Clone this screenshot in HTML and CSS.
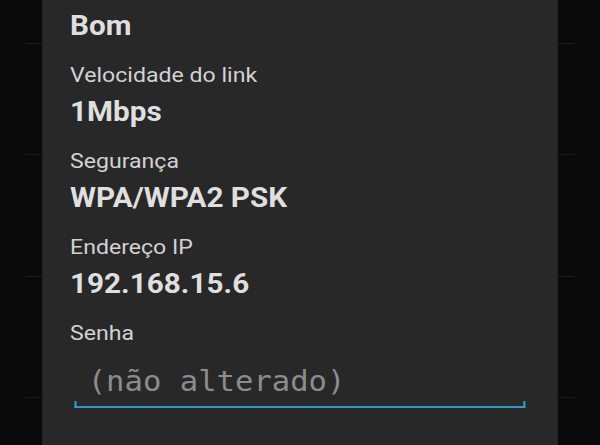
FILE: index.html
```html
<!DOCTYPE html>
<html lang="pt">
<head>
<meta charset="utf-8">
<link rel="stylesheet" href="styles.css">
</head>
<body>
<div class="screen">
  <div class="side side-left">
    <div class="rule r1"></div>
    <div class="rule r2"></div>
    <div class="rule r3"></div>
    <div class="rule r4"></div>
  </div>
  <div class="dialog">
    <div class="details">
      <div class="item">
        <div class="label">Intensidade do sinal</div>
        <div class="value">Bom</div>
      </div>
      <div class="item">
        <div class="label">Velocidade do link</div>
        <div class="value">1Mbps</div>
      </div>
      <div class="item">
        <div class="label">Segurança</div>
        <div class="value">WPA/WPA2 PSK</div>
      </div>
      <div class="item">
        <div class="label">Endereço IP</div>
        <div class="value">192.168.15.6</div>
      </div>
      <div class="item">
        <div class="label">Senha</div>
        <div class="field">
          <div class="field-text">(não alterado)</div>
          <div class="field-line"></div>
        </div>
      </div>
    </div>
  </div>
  <div class="side side-right">
    <div class="rule r1"></div>
    <div class="rule r2"></div>
    <div class="rule r3"></div>
    <div class="rule r4"></div>
  </div>
</div>
</body>
</html>
```

FILE: styles.css
```css
html, body {
  margin: 0;
  padding: 0;
  background: #0a0a0a;
}
body {
  width: 600px;
  height: 445px;
  overflow: hidden;
}
.screen {
  display: flex;
  width: 600px;
  height: 445px;
}
.side {
  width: 42px;
  flex: none;
  display: flex;
  flex-direction: column;
  background: #0a0a0a;
}
.side-left {
  align-items: flex-end;
}
.side-right {
  align-items: flex-start;
}
.rule {
  width: 16px;
  height: 1px;
  background: #1c1c1c;
}
.r1 { margin-top: 43px; }
.r2 { margin-top: 110px; }
.r3 { margin-top: 121px; }
.r4 { margin-top: 120px; }

.dialog {
  width: 516px;
  flex: none;
  box-sizing: border-box;
  padding-left: 28px;
  padding-right: 74px;
  background: #282828;
  overflow: hidden;
  box-shadow: inset 1px 0 0 #222222, inset -1px 0 0 #222222;
}
.details {
  margin-top: -28px;
  display: flex;
  flex-direction: column;
  font-family: Roboto, "Noto Sans", sans-serif;
  transform: scaleX(1.1);
  transform-origin: left top;
}
.item {
  margin-bottom: 12px;
}
.label {
  font-size: 21px;
  line-height: 34px;
  color: #d2d2d2;
  white-space: nowrap;
}
.value {
  font-size: 27px;
  line-height: 40px;
  font-weight: 700;
  color: #dfdfdf;
  white-space: nowrap;
}
.field {
  margin-top: 14px;
  margin-left: 3.6px;
}
.field-text {
  font-family: "DejaVu Sans Mono", "Liberation Mono", monospace;
  font-size: 27.8px;
  line-height: 36px;
  color: #8c8c8c;
  padding-left: 12.5px;
  white-space: nowrap;
}
.field-line {
  margin-top: 1px;
  height: 5px;
  border: 2px solid #2a9ac8;
  border-top: none;
}
```
